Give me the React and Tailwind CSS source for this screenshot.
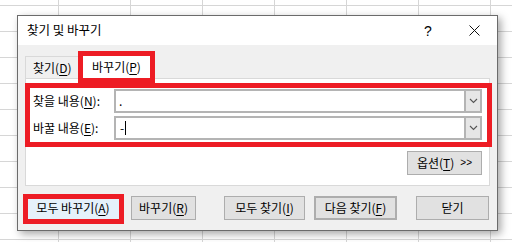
// Excel "찾기 및 바꾸기" dialog over a worksheet grid, with red annotation boxes.

function U({ children }) {
  return <span className="underline underline-offset-[2px]">{children}</span>
}

function Chevron() {
  return (
    <svg width="9" height="6" viewBox="0 0 9 6" aria-hidden>
      <path d="M1 1l3.5 3.5L8 1" fill="none" stroke="#555" strokeWidth="1.1" />
    </svg>
  )
}

function Combo({ children }) {
  return (
    <div className="flex h-[24px] flex-1 border-2 border-[#b4b4b4] bg-white">
      <div className="flex flex-1 items-center pl-[2px] leading-none">{children}</div>
      <div className="flex w-[16px] items-center justify-center border-l-2 border-[#b4b4b4] bg-[#e6e6e6]">
        <Chevron />
      </div>
    </div>
  )
}

function Btn({ className = '', children }) {
  return (
    <div
      className={`flex h-[24px] items-center justify-center border border-[#adadad] bg-[#e1e1e1] leading-none ${className}`}
    >
      {children}
    </div>
  )
}

/** red annotation frame drawn over its parent */
function RedBox({ className = 'inset-0' }) {
  return <div className={`pointer-events-none absolute z-10 border-[5px] border-[#ed1c24] ${className}`} />
}

export default function App() {
  return (
    <div className="relative h-[242px] w-[512px] overflow-hidden bg-white bg-[linear-gradient(to_right,#d6d6d6_1px,transparent_1px),linear-gradient(to_bottom,#d6d6d6_1px,transparent_1px)] bg-size-[72px_26px] bg-position-[58px_5px]">
      {/* dialog window */}
      <div className="absolute left-[17px] top-[15px] flex h-[216px] w-[481px] flex-col border border-[#6b6b6b] bg-[#f0f0f0] font-['Noto_Sans_CJK_KR',sans-serif] text-[12px] text-black shadow-[3px_3px_8px_rgba(0,0,0,0.35)]">
        {/* title bar */}
        <div className="flex h-[29px] items-center bg-white pl-[9px] pr-[17px]">
          <span className="text-[12.5px] leading-none">찾기 및 바꾸기</span>
          <span className="ml-auto w-[14px] text-center font-['Liberation_Sans',sans-serif] text-[14px] leading-none">?</span>
          <svg className="ml-[34px]" width="11" height="11" viewBox="0 0 11 11" aria-hidden>
            <path d="M0.5 0.5l10 10M10.5 0.5l-10 10" stroke="#111" strokeWidth="1" />
          </svg>
        </div>

        {/* body */}
        <div className="flex flex-1 flex-col px-[7px] pt-[6px]">
          {/* tabs */}
          <div className="flex h-[27px] items-end">
            <div className="flex h-[22px] w-[53px] items-center border-l border-t border-[#d9d9d9] pl-[7px] leading-none">
              찾기(<U>D</U>)
            </div>
            <div className="relative flex h-[27px] w-[77px] items-center justify-center bg-white pt-[5px] leading-none">
              바꾸기(<U>P</U>)
              <RedBox className="left-0 right-0 top-0 bottom-[-5px]" />
            </div>
          </div>

          {/* tab panel */}
          <div className="flex h-[108px] flex-col border border-[#d9d9d9] bg-white">
            <div className="relative ml-[-1px] mr-[-3px] mt-[4px] flex h-[64px] flex-col gap-[3px] pb-[7px] pl-[8px] pr-[10px] pt-[6px]">
              <div className="flex items-center">
                <span className="w-[81px] leading-none">찾을 내용(<U>N</U>):</span>
                <Combo>
                  <span className="pl-[1px]">.</span>
                </Combo>
              </div>
              <div className="flex items-center">
                <span className="w-[81px] leading-none">바꿀 내용(<U>E</U>):</span>
                <Combo>
                  <span className="pl-[2px]">-</span>
                  <span className="ml-[1px] h-[14px] w-px bg-black" />
                </Combo>
              </div>
              <RedBox />
            </div>
            <div className="mr-[7px] mt-[4px] flex justify-end">
              <Btn className="w-[75px] gap-[6px]">
                <span>
                  옵션(<U>T</U>)
                </span>
                <span className="font-['Liberation_Sans',sans-serif] text-[10px]">&gt;&gt;</span>
              </Btn>
            </div>
          </div>

          {/* bottom buttons */}
          <div className="mt-[10px] flex">
            <div className="relative ml-px">
              <Btn className="w-[94px] border-[#0078d7] bg-[#e5f1fb]">
                모두 바꾸기(<U>A</U>)
              </Btn>
              <RedBox className="-left-[3px] -right-[4px] -top-[2px] -bottom-[4px]" />
            </div>
            <Btn className="ml-[11px] w-[65px]">
              바꾸기(<U>R</U>)
            </Btn>
            <Btn className="ml-[28px] w-[81px]">
              모두 찾기(<U>I</U>)
            </Btn>
            <Btn className="ml-[9px] w-[83px] border-2 border-[#0078d7]">
              다음 찾기(<U>F</U>)
            </Btn>
            <Btn className="ml-[19px] w-[73px]">닫기</Btn>
          </div>
        </div>
      </div>
    </div>
  )
}
